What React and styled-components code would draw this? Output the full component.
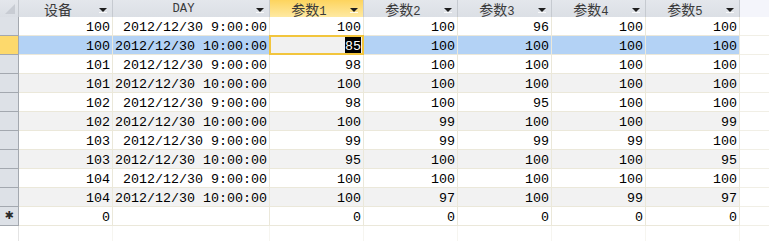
import styled, { createGlobalStyle, css } from 'styled-components';

const GlobalStyle = createGlobalStyle`
  html, body {
    margin: 0;
    padding: 0;
    background: #ffffff;
  }
  body {
    width: 769px;
    height: 241px;
    overflow: hidden;
  }
`;

// label split in the CJK part and the latin tail, the sheet draws them at different sizes
const columns = [
  { key: 'dev', cjk: '设备', tail: '', width: 94 },
  { key: 'day', cjk: '', tail: 'DAY', width: 157 },
  { key: 'p1', cjk: '参数', tail: '1', width: 94, active: true },
  { key: 'p2', cjk: '参数', tail: '2', width: 94 },
  { key: 'p3', cjk: '参数', tail: '3', width: 94 },
  { key: 'p4', cjk: '参数', tail: '4', width: 94 },
  { key: 'p5', cjk: '参数', tail: '5', width: 94 }
];

const nine = '2012/12/30 9:00:00';
const ten = '2012/12/30 10:00:00';

const rows = [
  ['100', nine, '100', '100', '96', '100', '100'],
  ['100', ten, '85', '100', '100', '100', '100'],
  ['101', nine, '98', '100', '100', '100', '100'],
  ['101', ten, '100', '100', '100', '100', '100'],
  ['102', nine, '98', '100', '95', '100', '100'],
  ['102', ten, '100', '99', '100', '100', '99'],
  ['103', nine, '99', '99', '99', '99', '100'],
  ['103', ten, '95', '100', '100', '100', '95'],
  ['104', nine, '100', '100', '100', '100', '100'],
  ['104', ten, '100', '97', '100', '99', '97']
];

const newRow = ['0', '', '0', '0', '0', '0', '0'];

const CURRENT = 1;

const Sheet = styled.div`
  display: flex;
  flex-direction: column;
  width: 769px;
  height: 241px;
  font-family: 'Liberation Mono', 'DejaVu Sans Mono', monospace;
  color: #000;
`;

const HeaderRow = styled.div`
  display: flex;
  height: 17px;
  flex: none;
`;

const Corner = styled.div`
  position: relative;
  width: 19px;
  height: 17px;
  flex: none;
  box-sizing: border-box;
  background: linear-gradient(#e4e7ec, #dadee4);
  border-right: 1px solid #c3c7cd;

  &::after {
    content: '';
    position: absolute;
    right: 3px;
    bottom: 3px;
    width: 0;
    height: 0;
    border-left: 10px solid transparent;
    border-bottom: 10px solid #c8ccd3;
  }
`;

const HeaderCell = styled.div`
  display: flex;
  align-items: center;
  box-sizing: border-box;
  height: 17px;
  flex: none;
  border-right: 1px solid #c6cad0;
  background: ${(p) =>
    p.$active ? 'linear-gradient(#fdd45e, #fee9a2)' : 'linear-gradient(#e4e7ec, #dbdfe5)'};
  color: #3a3a3a;
`;

const HeaderLabel = styled.span`
  display: flex;
  flex: 1;
  align-items: baseline;
  justify-content: center;
  height: 17px;
  padding-top: 3px;
  box-sizing: border-box;
  white-space: nowrap;
  font-family: 'Liberation Mono', monospace;
  font-size: 12.2px;
  line-height: 13px;
`;

const Cjk = styled.span`
  font-family: 'Noto Sans CJK SC', sans-serif;
  font-size: 14px;
  line-height: 13px;
`;

const Arrow = styled.span`
  position: relative;
  width: 15px;
  height: 17px;
  flex: none;

  &::before {
    content: '';
    position: absolute;
    left: 2px;
    top: 8px;
    border-left: 4px solid transparent;
    border-right: 4px solid transparent;
    border-top: 4px solid #1e1e1e;
  }
  &::after {
    content: '';
    position: absolute;
    left: 2px;
    top: 12px;
    width: 8px;
    height: 1px;
    background: #ffffff;
    opacity: 0.8;
  }
`;

const HeaderFiller = styled.div`
  flex: 1;
  background: #f4f5fb;
`;

const Row = styled.div`
  display: flex;
  height: 19px;
  flex: none;
  background: ${(p) => (p.$selected ? '#b3d2f5' : p.$alt ? '#f2f2f2' : '#ffffff')};
`;

const Selector = styled.div`
  width: 19px;
  height: 19px;
  flex: none;
  box-sizing: border-box;
  border-right: 1px solid #a3a8af;
  border-bottom: 1px solid #a3a8af;
  background: ${(p) => (p.$current ? '#fdd96c' : '#dde1e7')};
  color: #2a2a2a;
  font-family: 'DejaVu Sans', sans-serif;
  font-size: 11px;
  line-height: 18px;
  text-align: center;
`;

const Cell = styled.div`
  position: relative;
  box-sizing: border-box;
  height: 19px;
  flex: none;
  padding-right: 2px;
  overflow: hidden;
  border-right: 1px solid #ebe8da;
  border-bottom: 1px solid #ebe8da;
  font-size: 13.33px;
  line-height: 21px;
  text-align: right;
  white-space: nowrap;

  ${(p) =>
    p.$active &&
    css`
      overflow: visible;
      background: #f1f1f1;
      &::after {
        content: '';
        position: absolute;
        left: -1px;
        top: -1px;
        right: -1px;
        bottom: -1px;
        border: 2px solid #f2c53d;
        pointer-events: none;
      }
    `}
`;

const Picked = styled.span`
  display: inline-block;
  height: 17px;
  margin-top: 1px;
  vertical-align: top;
  line-height: 20px;
  background: #000;
  color: #fff;
`;

const RowFiller = styled.div`
  flex: 1;
  border-bottom: 1px solid #f1efe6;
  background: #ffffff;
`;

const Blank = styled.div`
  display: flex;
  flex: 1;
`;

const BlankSelector = styled.div`
  width: 19px;
  flex: none;
  box-sizing: border-box;
  border-right: 1px solid #e4e4e4;
`;

const BlankCell = styled.div`
  flex: none;
  box-sizing: border-box;
  border-right: 1px solid #f6f5f0;
`;

function DataRow({ values, index, isNew }) {
  const selected = index === CURRENT;
  return (
    <Row $selected={selected} $alt={!isNew && index % 2 === 1}>
      <Selector $current={selected}>{isNew ? '✱' : ''}</Selector>
      {columns.map((col, i) => {
        const active = selected && col.active;
        return (
          <Cell key={col.key} style={{ width: col.width }} $active={active}>
            {active ? <Picked>{values[i]}</Picked> : values[i]}
          </Cell>
        );
      })}
      <RowFiller />
    </Row>
  );
}

export default function App() {
  return (
    <>
      <GlobalStyle />
      <Sheet>
        <HeaderRow>
          <Corner />
          {columns.map((col) => (
            <HeaderCell key={col.key} style={{ width: col.width }} $active={col.active}>
              <HeaderLabel>
                {col.cjk && <Cjk>{col.cjk}</Cjk>}
                {col.tail}
              </HeaderLabel>
              <Arrow />
            </HeaderCell>
          ))}
          <HeaderFiller />
        </HeaderRow>
        {rows.map((r, i) => (
          <DataRow key={i} values={r} index={i} />
        ))}
        <DataRow values={newRow} index={rows.length} isNew />
        <Blank>
          <BlankSelector />
          {columns.map((col) => (
            <BlankCell key={col.key} style={{ width: col.width }} />
          ))}
        </Blank>
      </Sheet>
    </>
  );
}
